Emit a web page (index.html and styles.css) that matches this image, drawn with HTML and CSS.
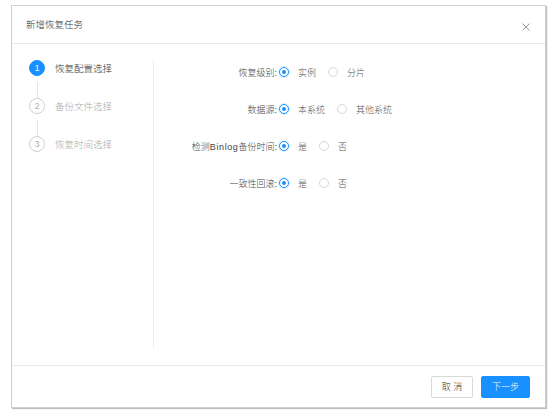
FILE: index.html
```html
<!DOCTYPE html>
<html lang="zh-CN">
<head>
    <meta charset="UTF-8">
    <title>新增恢复任务</title>
    <link rel="stylesheet" href="styles.css">
</head>
<body>
    <div class="page">
        <div class="dialog">
            <div class="dialog-header">
                <h2>新增恢复任务</h2>
                <span class="close">
                    <svg width="8" height="8" viewBox="0 0 8 8"><path d="M0.5 0.5L7.5 7.5M7.5 0.5L0.5 7.5" stroke="#999" stroke-width="1" fill="none"/></svg>
                </span>
            </div>
            <div class="dialog-body">
                <ul class="steps">
                    <li class="step active">
                        <div class="step-row"><span class="num">1</span><span class="title">恢复配置选择</span></div>
                        <div class="tail"></div>
                    </li>
                    <li class="step">
                        <div class="step-row"><span class="num">2</span><span class="title">备份文件选择</span></div>
                        <div class="tail"></div>
                    </li>
                    <li class="step">
                        <div class="step-row"><span class="num">3</span><span class="title">恢复时间选择</span></div>
                    </li>
                </ul>
                <div class="form">
                    <div class="form-row">
                        <label class="label">恢复级别:</label>
                        <div class="radios">
                            <span class="radio checked"><i></i>实例</span>
                            <span class="radio"><i></i>分片</span>
                        </div>
                    </div>
                    <div class="form-row">
                        <label class="label">数据源:</label>
                        <div class="radios">
                            <span class="radio checked"><i></i>本系统</span>
                            <span class="radio"><i></i>其他系统</span>
                        </div>
                    </div>
                    <div class="form-row">
                        <label class="label">检测<span class="latin">Binlog</span>备份时间:</label>
                        <div class="radios">
                            <span class="radio checked"><i></i>是</span>
                            <span class="radio"><i></i>否</span>
                        </div>
                    </div>
                    <div class="form-row">
                        <label class="label">一致性回滚:</label>
                        <div class="radios">
                            <span class="radio checked"><i></i>是</span>
                            <span class="radio"><i></i>否</span>
                        </div>
                    </div>
                </div>
            </div>
            <div class="dialog-footer">
                <button class="btn">取 消</button>
                <button class="btn primary">下一步</button>
            </div>
        </div>
    </div>
</body>
</html>
```

FILE: styles.css
```css
* { margin: 0; padding: 0; box-sizing: border-box; }
li { list-style: none; }
body, html {
    width: 100%;
    height: 100%;
    background: #fff;
    font-family: "Liberation Sans", "Noto Sans CJK SC", sans-serif;
    font-size: 9px;
    font-weight: 300;
    color: #333;
}
.page {
    padding: 5px 9px 0 11px;
}
.dialog {
    width: 535px;
    height: 403px;
    border: 1px solid #cfcfcf;
    box-shadow: 1px 1px 1px rgba(0, 0, 0, 0.25);
    display: flex;
    flex-direction: column;
    background: #fff;
}
.dialog-header {
    height: 38px;
    border-bottom: 1px solid #e8e8e8;
    display: flex;
    align-items: center;
    justify-content: space-between;
    padding: 0 15px 0 14px;
}
.dialog-header h2 {
    font-size: 9.5px;
    font-weight: 300;
    color: #333;
    margin-top: -1px;
}
.close {
    display: flex;
    margin-top: 5px;
}
.dialog-body {
    flex: 1;
    display: flex;
    padding: 16px 0;
}
/* 왼쪽 단계 */
.steps {
    width: 142px;
    padding-left: 17px;
    border-right: 1px solid #eee;
}
.step-row {
    display: flex;
    align-items: center;
    height: 16px;
}
.num {
    width: 16px;
    height: 16px;
    border-radius: 50%;
    border: 1px solid #d0d0d0;
    color: #aaa;
    font-size: 8.5px;
    display: flex;
    align-items: center;
    justify-content: center;
    flex-shrink: 0;
}
.title {
    margin-left: 10px;
    font-size: 9.5px;
    color: #aaa;
}
.step.active .num {
    background: #1890ff;
    border-color: #1890ff;
    color: #fff;
}
.step.active .title {
    color: #333;
}
.tail {
    width: 1px;
    height: 16px;
    margin: 6px 0 0 8px;
    background: #e3e3e3;
}
/* 오른쪽 폼 */
.form {
    flex: 1;
    display: flex;
    flex-direction: column;
    gap: 13px;
}
.form-row {
    display: flex;
    align-items: center;
    height: 24px;
}
.label {
    width: 125px;
    text-align: right;
    padding-right: 2px;
    color: #444;
}
.latin {
    letter-spacing: 0.6px;
}
.radios {
    display: flex;
    align-items: center;
}
.radio {
    display: flex;
    align-items: center;
    color: #555;
    margin-right: 12px;
}
.radio i {
    width: 10px;
    height: 10px;
    border-radius: 50%;
    border: 1px solid #d9d9d9;
    margin-right: 9px;
    display: flex;
    align-items: center;
    justify-content: center;
}
.radio.checked i {
    border-color: #1890ff;
    box-shadow: 0 0 0 1px rgba(24, 144, 255, 0.15);
}
.radio.checked i::after {
    content: "";
    width: 4px;
    height: 4px;
    border-radius: 50%;
    background: #1890ff;
}
.dialog-footer {
    height: 42px;
    border-top: 1px solid #e8e8e8;
    display: flex;
    align-items: center;
    justify-content: flex-end;
    gap: 8px;
    padding-right: 15px;
}
.btn {
    height: 22px;
    border-radius: 2px;
    border: 1px solid #d9d9d9;
    background: #fff;
    color: #333;
    font-family: inherit;
    font-size: 9px;
    font-weight: 300;
    width: 42px;
}
.btn.primary {
    width: 49px;
    background: #1890ff;
    border-color: #1890ff;
    color: #fff;
}
```
